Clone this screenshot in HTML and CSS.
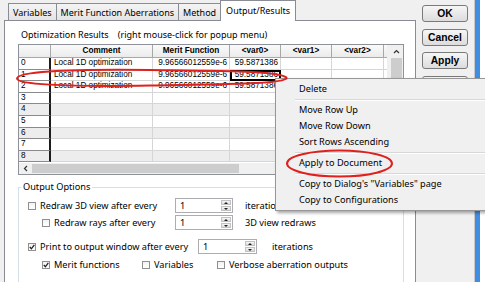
FILE: index.html
```html
<html>
<head>
    <title>Optimization - Output/Results</title>
    <link rel="stylesheet" href="styles.css">
</head>
<body>
    <div class="dialog">
        <div class="main">
            <div class="tabs">
                <div class="tab">Variables</div>
                <div class="tab">Merit Function Aberrations</div>
                <div class="tab">Method</div>
                <div class="tab active">Output/Results</div>
            </div>

            <div class="pane">
                <div class="caption">Optimization Results <span class="hint">(right mouse-click for popup menu)</span></div>

                <div class="grid">
                    <div class="grid-body">
                        <div class="row head">
                            <div class="cell rh"></div>
                            <div class="cell">Comment</div>
                            <div class="cell">Merit Function</div>
                            <div class="cell">&lt;var0&gt;</div>
                            <div class="cell">&lt;var1&gt;</div>
                            <div class="cell">&lt;var2&gt;</div>
                            <div class="cell rest"></div>
                        </div>
                        <div class="row">
                            <div class="cell rh">0</div>
                            <div class="cell">Local 1D optimization</div>
                            <div class="cell num">9.96566012559e-6</div>
                            <div class="cell num">59.5871386</div>
                            <div class="cell"></div>
                            <div class="cell"></div>
                            <div class="cell rest"></div>
                        </div>
                        <div class="row">
                            <div class="cell rh">1</div>
                            <div class="cell">Local 1D optimization</div>
                            <div class="cell num">9.96566012559e-6</div>
                            <div class="cell num current">59.5871386</div>
                            <div class="cell"></div>
                            <div class="cell"></div>
                            <div class="cell rest"></div>
                        </div>
                        <div class="row">
                            <div class="cell rh">2</div>
                            <div class="cell">Local 1D optimization</div>
                            <div class="cell num">9.96566012559e-6</div>
                            <div class="cell num">59.5871386</div>
                            <div class="cell"></div>
                            <div class="cell"></div>
                            <div class="cell rest"></div>
                        </div>
                        <div class="row">
                            <div class="cell rh">3</div>
                            <div class="cell"></div><div class="cell"></div><div class="cell"></div>
                            <div class="cell"></div><div class="cell"></div><div class="cell rest"></div>
                        </div>
                        <div class="row alt">
                            <div class="cell rh">4</div>
                            <div class="cell"></div><div class="cell"></div><div class="cell"></div>
                            <div class="cell"></div><div class="cell"></div><div class="cell rest"></div>
                        </div>
                        <div class="row">
                            <div class="cell rh">5</div>
                            <div class="cell"></div><div class="cell"></div><div class="cell"></div>
                            <div class="cell"></div><div class="cell"></div><div class="cell rest"></div>
                        </div>
                        <div class="row alt">
                            <div class="cell rh">6</div>
                            <div class="cell"></div><div class="cell"></div><div class="cell"></div>
                            <div class="cell"></div><div class="cell"></div><div class="cell rest"></div>
                        </div>
                        <div class="row">
                            <div class="cell rh">7</div>
                            <div class="cell"></div><div class="cell"></div><div class="cell"></div>
                            <div class="cell"></div><div class="cell"></div><div class="cell rest"></div>
                        </div>
                        <div class="row alt">
                            <div class="cell rh">8</div>
                            <div class="cell"></div><div class="cell"></div><div class="cell"></div>
                            <div class="cell"></div><div class="cell"></div><div class="cell rest"></div>
                        </div>
                    </div>

                    <div class="vscroll">
                        <div class="vs-up">
                            <svg width="7" height="5" viewBox="0 0 7 5"><polyline points="1,4 3.5,1.5 6,4" fill="none" stroke="#333" stroke-width="1.2"/></svg>
                        </div>
                        <div class="vs-thumb"></div>
                    </div>

                    <div class="hscroll">
                        <div class="hs-left">
                            <svg width="5" height="7" viewBox="0 0 5 7"><polyline points="4,1 1.5,3.5 4,6" fill="none" stroke="#333" stroke-width="1.2"/></svg>
                        </div>
                        <div class="hs-thumb"></div>
                    </div>
                    <div class="corner"></div>
                </div>

                <fieldset class="group">
                    <legend>Output Options</legend>

                    <div class="opt first">
                        <div class="lead w147"><span class="box"></span>Redraw 3D view after every</div>
                        <div class="spin"><span>1</span><div class="spin-btns"><i class="up"></i><i class="down"></i></div></div>
                        <div class="after">iterations</div>
                    </div>

                    <div class="opt sub">
                        <div class="lead w133"><span class="box"></span>Redraw rays after every</div>
                        <div class="spin"><span>1</span><div class="spin-btns"><i class="up"></i><i class="down"></i></div></div>
                        <div class="after">3D view redraws</div>
                    </div>

                    <div class="opt gap">
                        <div class="lead w170"><span class="box checked"><svg width="6" height="6" viewBox="0 0 6 6"><polyline points="0.8,3 2.4,4.8 5.3,0.9" fill="none" stroke="#222" stroke-width="1.3"/></svg></span>Print to output window after every</div>
                        <div class="spin wide"><span>1</span><div class="spin-btns"><i class="up"></i><i class="down"></i></div></div>
                        <div class="after far">iterations</div>
                    </div>

                    <div class="opt sub">
                        <div class="lead w100"><span class="box checked"><svg width="6" height="6" viewBox="0 0 6 6"><polyline points="0.8,3 2.4,4.8 5.3,0.9" fill="none" stroke="#222" stroke-width="1.3"/></svg></span>Merit functions</div>
                        <div class="lead w75"><span class="box"></span>Variables</div>
                        <div class="lead"><span class="box"></span>Verbose aberration outputs</div>
                    </div>
                </fieldset>
            </div>
        </div>

        <div class="buttons">
            <button>OK</button>
            <button>Cancel</button>
            <button>Apply</button>
            <button></button>
        </div>

        <div class="edge"></div>
    </div>

    <!-- popup menu over the grid -->
    <div class="menu">
        <div class="item">Delete</div>
        <div class="sep"></div>
        <div class="item">Move Row Up</div>
        <div class="item">Move Row Down</div>
        <div class="item">Sort Rows Ascending</div>
        <div class="sep"></div>
        <div class="item">Apply to Document</div>
        <div class="sep"></div>
        <div class="item">Copy to Dialog's &quot;Variables&quot; page</div>
        <div class="item">Copy to Configurations</div>
    </div>

    <!-- red hand-drawn marks -->
    <svg class="marks" width="485" height="282" viewBox="0 0 485 282">
        <path d="M287,78 C281,71 230,71 150,70 C60,69 17,72 17,78.5 C17,84 60,87 150,85.5 C232,84 283,84 287,78" fill="none" stroke="#e0201e" stroke-width="2"/>
        <ellipse cx="339.5" cy="163.5" rx="52.5" ry="13" fill="none" stroke="#e0201e" stroke-width="2"/>
    </svg>
</body>
</html>
```

FILE: styles.css
```css
* {
    box-sizing: border-box;
}

body {
    margin: 0;
    width: 485px;
    height: 282px;
    overflow: hidden;
    position: relative;
    background: #fff;
    font-family: "Noto Sans", "Open Sans", sans-serif;
    font-size: 9.2px;
    color: #000;
}

.dialog {
    display: flex;
    width: 480px;
    height: 282px;
    background: #f0f0f0;
}

/* left part: tabs + page */
.main {
    margin-left: 4px;
    width: 412px;
    display: flex;
    flex-direction: column;
}

.tabs {
    height: 23px;
    display: flex;
    align-items: flex-end;
    padding-left: 4px;
    position: relative;
    z-index: 1;
    font-size: 9px;
}

.tab {
    height: 17px;
    line-height: 17px;
    padding: 0 4px;
    margin-right: -1px;
    border: 1px solid #898c95;
    border-bottom: none;
    background: linear-gradient(#f4f4f4, #e4e4e4);
    white-space: nowrap;
}

.tab.active {
    height: 21px;
    line-height: 19px;
    padding: 0 5px;
    margin-bottom: -1px;
    background: #fff;
}

.pane {
    flex: 1;
    background: #fff;
    border: 1px solid #898c95;
    padding: 0 11px 0 13px;
}

.caption {
    height: 23px;
    padding: 7px 0 0 3px;
    line-height: 14px;
    white-space: nowrap;
    font-size: 9px;
}

.hint {
    margin-left: 7px;
}

/* results grid */
.grid {
    display: grid;
    grid-template-columns: 1fr 16px;
    grid-template-rows: 118px 11px;
    border: 1px solid #8e9298;
}

.grid-body {
    overflow: hidden;
    background: #fff;
}

.row {
    display: grid;
    grid-template-columns: 32px 102px 77px 51px 51px 52px 1fr;
    height: 11.6px;
}

.row.head {
    height: 13px;
}

.row.alt {
    background: #ededed;
}

.cell {
    font-family: "Liberation Sans", Arial, sans-serif;
    font-size: 8.2px;
    line-height: 10px;
    padding: 0 3px;
    white-space: nowrap;
    overflow: hidden;
    border-right: 1px solid #d6d6d6;
    border-bottom: 1px solid #d6d6d6;
}

.cell.num {
    text-align: right;
    padding: 0 2px;
}

.cell.rest {
    border-right: none;
}

.cell.rh {
    padding: 0 2px;
    border-right: 2px solid #1c1c1c;
    border-bottom-color: #8a8a8a;
}

.head .cell {
    background: linear-gradient(#fafafa, #ebebeb);
    border-color: #a8a8a8;
    font-weight: bold;
    text-align: center;
    line-height: 12px;
}

.head .cell.rh {
    border-right: 1px solid #a8a8a8;
}

.cell.current {
    outline: 2px solid #000;
    outline-offset: -2px;
}

.vscroll {
    background: #f0f0f0;
    padding: 0 1px 0 4px;
}

.vs-up {
    height: 13px;
    display: flex;
    align-items: center;
    justify-content: center;
}

.vs-thumb {
    height: 60px;
    background: #cdcdcd;
}

.hscroll {
    display: flex;
    background: #f0f0f0;
}

.hs-left {
    width: 12px;
    display: flex;
    align-items: center;
    justify-content: center;
}

.hs-thumb {
    width: 207px;
    margin: 1px 0 1px 1px;
    background: #cdcdcd;
}

.corner {
    background: #f0f0f0;
}

/* output options group */
.group {
    margin: 5px 0 0;
    padding: 0 0 20px;
    border: 1px solid #d5dfe5;
}

.group legend {
    margin-left: 2px;
    padding: 0 2px;
    line-height: 14px;
}

.opt {
    display: flex;
    align-items: center;
    height: 15px;
    margin-top: 2px;
    padding-left: 9px;
    white-space: nowrap;
}

.opt.first {
    margin-top: 4px;
}

.opt.sub {
    padding-left: 23px;
}

.opt.gap {
    margin-top: 9px;
}

.opt.gap + .opt {
    margin-top: 3px;
}

.lead {
    display: flex;
    align-items: center;
}

.w147 { width: 147px; }
.w133 { width: 133px; }
.w170 { width: 170px; }
.w100 { width: 100px; }
.w75 { width: 75px; }

.box {
    width: 8px;
    height: 8px;
    margin-right: 4px;
    border: 1px solid #8f8f8f;
    background: linear-gradient(#f2f2f2, #ffffff);
    display: flex;
    align-items: center;
    justify-content: center;
}

.spin {
    width: 58px;
    height: 15px;
    border: 1px solid #abadb3;
    background: #fff;
    display: flex;
    justify-content: space-between;
    line-height: 13px;
    padding-left: 4px;
}

.spin.wide {
    width: 59px;
}

.spin-btns {
    width: 11px;
    padding: 1px 1px 1px 0;
    display: flex;
    flex-direction: column;
    gap: 1px;
}

.spin-btns i {
    flex: 1;
    background: linear-gradient(#f6f6f6, #dadada);
    border: 1px solid #c2c2c2;
    position: relative;
}

.spin-btns i::after {
    content: "";
    position: absolute;
    left: 2px;
    top: 1px;
    border-left: 2px solid transparent;
    border-right: 2px solid transparent;
}

.spin-btns .up::after {
    border-bottom: 2px solid #222;
}

.spin-btns .down::after {
    border-top: 2px solid #222;
}

.after {
    margin-left: 12px;
}

.after.far {
    margin-left: 15px;
}

/* dialog buttons */
.buttons {
    margin-left: 6px;
    width: 46px;
    padding-top: 5px;
    display: flex;
    flex-direction: column;
    gap: 6.5px;
}

.buttons button {
    height: 17px;
    padding: 0;
    border: 1px solid #7a7a7a;
    border-radius: 3px;
    background: linear-gradient(#f6f6f6, #dcdcdc);
    font-family: "Liberation Sans", Arial, sans-serif;
    font-weight: bold;
    font-size: 10.3px;
    color: #000;
}

.edge {
    margin-left: 6px;
    width: 6px;
    border-left: 1px solid #c9c9c9;
    background: #3f8ee2;
}

/* context menu */
.menu {
    position: absolute;
    left: 275px;
    top: 78px;
    width: 220px;
    padding: 2px;
    background: #f0f0f0;
    border: 1px solid #979797;
    box-shadow: 2px 2px 3px rgba(0, 0, 0, 0.35);
}

.item {
    height: 16px;
    line-height: 16px;
    padding-left: 21px;
    white-space: nowrap;
}

.sep {
    height: 5px;
    margin-left: 17px;
    padding-top: 2px;
}

.sep::after {
    content: "";
    display: block;
    height: 1px;
    background: #d7d7d7;
    border-bottom: 1px solid #fff;
    box-sizing: content-box;
}

.marks {
    position: absolute;
    left: 0;
    top: 0;
    pointer-events: none;
}
```
